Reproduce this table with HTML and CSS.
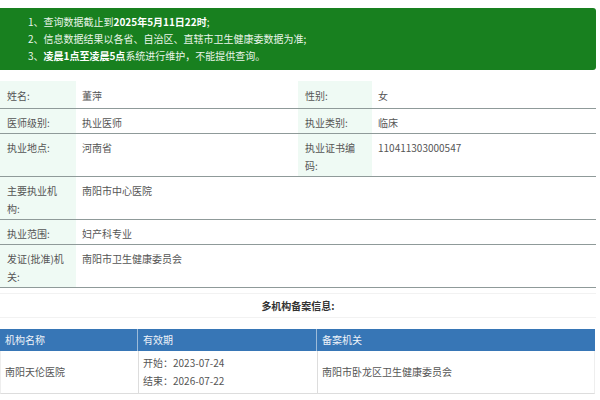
FILE: index.html
```html
<!DOCTYPE html>
<html lang="zh-CN">
<head>
<meta charset="utf-8">
<link rel="stylesheet" href="styles.css">
</head>
<body>
<div class="page">
  <div class="notice">
    <p>1、查询数据截止到<b>2025年5月11日22时</b>;</p>
    <p>2、信息数据结果以各省、自治区、直辖市卫生健康委数据为准;</p>
    <p>3、<b>凌晨1点至凌晨5点</b>系统进行维护，不能提供查询。</p>
  </div>

  <div class="info">
    <div class="row row-first">
      <div class="lbl">姓名:</div><div class="val">董萍</div>
      <div class="lbl">性别:</div><div class="val">女</div>
    </div>
    <div class="row">
      <div class="lbl">医师级别:</div><div class="val">执业医师</div>
      <div class="lbl">执业类别:</div><div class="val">临床</div>
    </div>
    <div class="row">
      <div class="lbl">执业地点:</div><div class="val">河南省</div>
      <div class="lbl">执业证书编码:</div><div class="val">110411303000547</div>
    </div>
    <div class="row wide">
      <div class="lbl">主要执业机构:</div><div class="val">南阳市中心医院</div>
    </div>
    <div class="row wide">
      <div class="lbl">执业范围:</div><div class="val">妇产科专业</div>
    </div>
    <div class="row wide">
      <div class="lbl">发证(批准)机关:</div><div class="val">南阳市卫生健康委员会</div>
    </div>
  </div>

  <div class="caption">多机构备案信息:</div>

  <div class="multi">
    <div class="mrow head">
      <div class="c">机构名称</div><div class="c">有效期</div><div class="c">备案机关</div>
    </div>
    <div class="mrow body">
      <div class="c mid">南阳天伦医院</div>
      <div class="c">开始：2023-07-24<br>结束：2026-07-22</div>
      <div class="c mid">南阳市卧龙区卫生健康委员会</div>
    </div>
  </div>
</div>
</body>
</html>
```

FILE: styles.css
```css
html, body {
  margin: 0;
  padding: 0;
  background: #ffffff;
}
body {
  font-family: "Noto Sans CJK SC", "Noto Sans", sans-serif;
  font-size: 10px;
  color: #555555;
}
.page {
  width: 596px;
  padding-top: 8px;
}
.notice {
  background: #18801f;
  color: #eaf5ea;
  border-radius: 0 3px 3px 0;
  padding: 5px 10px 5px 28px;
  height: 52px;
}
.notice p {
  margin: 0;
  line-height: 17px;
  font-size: 10px;
}
.notice b {
  color: #ffffff;
  font-weight: bold;
}
.info {
  margin-top: 11px;
}
.row {
  display: grid;
  grid-template-columns: 76px 222px 74px 1fr;
  border-bottom: 1px solid #8f9a99;
}
.row.wide {
  grid-template-columns: 76px 1fr;
}
.lbl {
  background: #effaf4;
  padding: 5px 11px 1px 7px;
  line-height: 18px;
  min-height: 18px;
}
.val {
  padding: 5px 6px 1px 6px;
  line-height: 18px;
}
.row-first .lbl, .row-first .val {
  padding-top: 6px;
  padding-bottom: 3px;
}
.caption {
  margin-top: 5px;
  height: 23px;
  line-height: 23px;
  text-align: center;
  font-weight: bold;
  color: #333333;
  border-top: 1px solid #f2f2f2;
  border-bottom: 1px solid #f2f2f2;
}
.multi {
  margin-top: 11px;
  width: 595px;
}
.mrow {
  display: grid;
  grid-template-columns: 138px 179px 1fr;
}
.mrow.head {
  background: #3776b6;
  color: #eef3f9;
  height: 22px;
  line-height: 22px;
}
.mrow.head .c {
  padding: 0 5px;
  border-right: 1px solid #9dbbd9;
}
.mrow.head .c:last-child {
  border-right: none;
}
.mrow.body {
  border-bottom: 1px solid #dddddd;
  border-left: 1px solid #eeeeee;
  border-right: 1px solid #eeeeee;
}
.mrow.body .c {
  padding: 3px 5px 3px 4px;
  line-height: 18px;
  border-right: 1px solid #dddddd;
}
.mrow.body .c:last-child {
  border-right: none;
}
.mrow.body .mid {
  display: flex;
  align-items: center;
}
```
